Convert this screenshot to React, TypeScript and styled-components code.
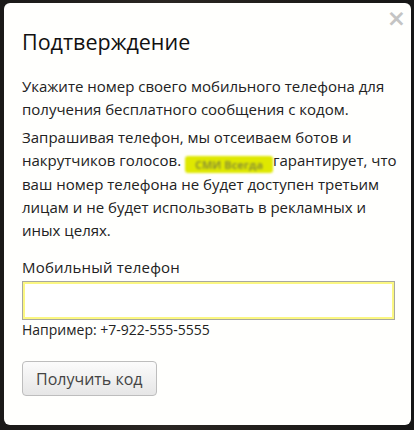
import React from "react";
import styled, { createGlobalStyle } from "styled-components";

const Global = createGlobalStyle`
  html, body { margin: 0; padding: 0; }
  body {
    width: 414px;
    height: 430px;
    overflow: hidden;
    background: #1c1b19;
    font-family: "Open Sans", "Noto Sans", sans-serif;
  }
`;

const Backdrop = styled.div`
  width: 414px;
  height: 430px;
  box-sizing: border-box;
  padding: 3px 3px 5px 4px;
  background: linear-gradient(90deg, #1a1918 0%, #2a2622 40%, #1f1d1a 70%, #161616 100%);
`;

const Modal = styled.div`
  position: relative;
  height: 422px;
  box-sizing: border-box;
  background: #fffffd;
  border-radius: 6px;
  padding: 24px 8px 0 18px;
  color: #222;
`;

const Close = styled.span`
  position: absolute;
  top: 3px;
  right: 5px;
  font-size: 23px;
  line-height: 24px;
  font-weight: 700;
  color: #c4c4c4;
  font-family: "DejaVu Sans", sans-serif;
`;

const Title = styled.h1`
  margin: 0 0 18px;
  font-size: 21.5px;
  line-height: 30px;
  font-weight: 400;
  color: #111;
`;

const Para = styled.p`
  margin: 0 0 5px;
  font-size: 15px;
  line-height: 23px;
  color: #222;
`;

const Blur = styled.span`
  display: inline-block;
  width: 88px;
  height: 17px;
  vertical-align: -3px;
  background: #dfe800;
  border-radius: 3px;
  filter: blur(1.3px);
  color: #8e9430;
  font-size: 11px;
  font-weight: 700;
  line-height: 17px;
  text-align: center;
`;

const Label = styled.div`
  margin-top: 15px;
  font-size: 15px;
  letter-spacing: 0.2px;
  line-height: 20px;
  color: #222;
`;

const Input = styled.input`
  display: block;
  box-sizing: border-box;
  width: 373px;
  height: 39px;
  margin-top: 4px;
  border: 1px solid #a8a8a0;
  box-shadow: inset 0 0 0 2px #fbf782;
  background: #fff;
  outline: none;
`;

const Hint = styled.div`
  font-size: 14px;
  line-height: 20px;
  color: #222;
`;

const Button = styled.button`
  margin-top: 21px;
  height: 35px;
  padding: 0 13px;
  border: 1px solid #bdbdbd;
  border-radius: 4px;
  background: linear-gradient(#fbfbfb, #e6e6e6);
  font-family: inherit;
  font-size: 16px;
  color: #444;
`;

export default function App() {
  return (
    <>
      <Global />
      <Backdrop>
        <Modal>
          <Close>×</Close>
          <Title>Подтверждение</Title>
          <Para>Укажите номер своего мобильного телефона для получения бесплатного сообщения с кодом.</Para>
          <Para>
            Запрашивая телефон, мы отсеиваем ботов и накрутчиков голосов. <Blur>СМИ Всегда</Blur>гарантирует, что ваш номер телефона не будет доступен третьим лицам и не будет использовать в рекламных и иных{"\u00a0"}целях.
          </Para>
          <Label>Мобильный телефон</Label>
          <Input />
          <Hint>Например: +7-922-555-5555</Hint>
          <Button>Получить код</Button>
        </Modal>
      </Backdrop>
    </>
  );
}
